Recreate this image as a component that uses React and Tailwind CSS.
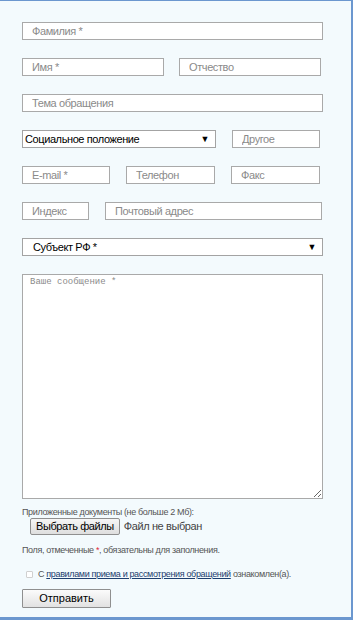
import React from "react";

const inputCls =
  "h-[18px] border border-[#a9a9a9] bg-white px-[9px] text-[11px] tracking-[-0.4px] text-[#333] placeholder:text-[#8a8a8a] outline-none";

function Select({ label, className, pl }) {
  return (
    <div
      className={
        "h-[18px] border border-[#a3a3a3] bg-white flex items-center justify-between pr-[6px] text-[11px] tracking-[-0.4px] text-black " +
        pl +
        " " +
        className
      }
    >
      <span>{label}</span>
      <span className="text-[9px] leading-none">▼</span>
    </div>
  );
}

export default function App() {
  return (
    <div
      className="w-[353px] h-[620px] bg-[#f3fafd] border-t border-r-2 border-b-[3px] border-[#6b97cf] box-border"
      style={{ fontFamily: '"Liberation Sans", Arial, sans-serif' }}
    >
      <div className="pl-[22px] pt-[21px] flex flex-col w-[323px]">
        <input className={inputCls + " w-[301px]"} placeholder="Фамилия *" />
        <div className="flex mt-[18px]">
          <input className={inputCls + " w-[142px]"} placeholder="Имя *" />
          <input className={inputCls + " w-[142px] ml-[15px]"} placeholder="Отчество" />
        </div>
        <input className={inputCls + " w-[301px] mt-[18px]"} placeholder="Тема обращения" />
        <div className="flex mt-[18px]">
          <Select label="Социальное положение" className="w-[194px]" pl="pl-[2px]" />
          <input className={inputCls + " w-[88px] ml-[16px]"} placeholder="Другое" />
        </div>
        <div className="flex mt-[18px]">
          <input className={inputCls + " w-[88px]"} placeholder="E-mail *" />
          <input className={inputCls + " w-[89px] ml-[16px]"} placeholder="Телефон" />
          <input className={inputCls + " w-[89px] ml-[16px]"} placeholder="Факс" />
        </div>
        <div className="flex mt-[18px]">
          <input className={inputCls + " w-[67px]"} placeholder="Индекс" />
          <input className={inputCls + " w-[217px] ml-[16px]"} placeholder="Почтовый адрес" />
        </div>
        <Select label="Субъект РФ *" className="w-[301px] mt-[18px]" pl="pl-[10px]" />
        <textarea
          className="w-[301px] h-[225px] mt-[18px] border border-[#a9a9a9] bg-white px-[7px] py-[1px] text-[9px] text-[#333] placeholder:text-[#8a8a8a] outline-none"
          style={{ fontFamily: '"Liberation Mono", "Courier New", monospace' }}
          placeholder="Ваше сообщение *"
        />
        <div className="mt-[8px] text-[9px] leading-[10px] tracking-[-0.35px] text-[#555]">
          Приложенные документы (не больше 2 Мб):
        </div>
        <div className="flex items-center mt-[1px] ml-[8px]">
          <button className="h-[17px] px-[5px] border border-[#8f8f8f] rounded-[2px] bg-gradient-to-b from-[#f6f6f6] to-[#dedede] text-[11px] tracking-[-0.4px] leading-none text-black">
            Выбрать файлы
          </button>
          <span className="ml-[4px] text-[11px] tracking-[-0.4px] text-[#444]">Файл не выбран</span>
        </div>
        <div className="mt-[10px] text-[9px] leading-[10px] tracking-[-0.35px] text-[#555]">
          Поля, отмеченные <span className="text-[#e0283a]">*</span>, обязательны для заполнения.
        </div>
        <div className="flex items-center mt-[14px] ml-[4px] text-[9px] leading-[10px] tracking-[-0.35px] text-[#555]">
          <span className="w-[7px] h-[7px] border border-[#d0d0d0] rounded-[1px] bg-white mr-[5px]"></span>
          <span>
            С{" "}
            <span className="text-[#1d3e6e] underline">правилами приема и рассмотрения обращений</span>{" "}
            ознакомлен(а).
          </span>
        </div>
        <button className="mt-[10px] w-[89px] h-[19px] border border-[#8f8f8f] rounded-[1px] bg-gradient-to-b from-[#fbfbfb] to-[#e2e2e2] text-[11px] leading-none text-black">
          Отправить
        </button>
      </div>
    </div>
  );
}
